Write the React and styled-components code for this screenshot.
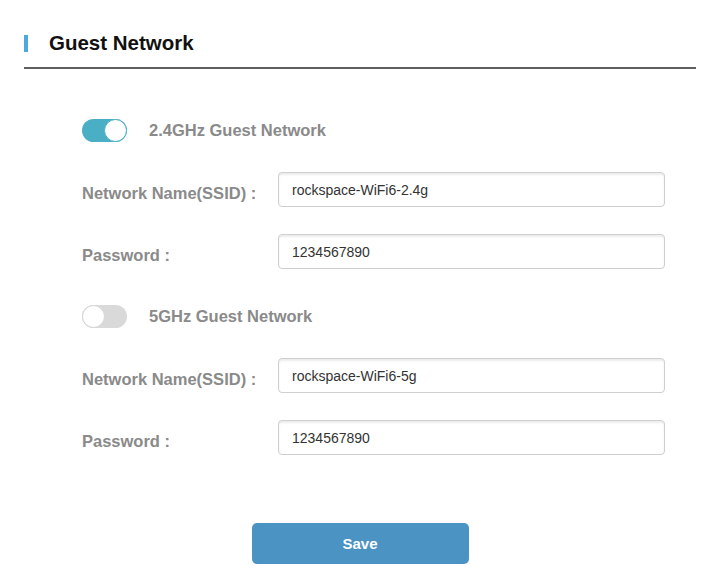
import React, { useState } from "react";
import styled, { createGlobalStyle } from "styled-components";

const GlobalStyle = createGlobalStyle`
	body {
		margin: 0;
		background: #ffffff;
		font-family: "Liberation Sans", Arial, sans-serif;
	}
`;

const networks = [
	{ id: "24", band: "2.4GHz Guest Network", ssid: "rockspace-WiFi6-2.4g", password: "1234567890", on: true },
	{ id: "5", band: "5GHz Guest Network", ssid: "rockspace-WiFi6-5g", password: "1234567890", on: false },
];

export default function App() {
	const [state, setState] = useState(networks);

	const toggle = (id) =>
		setState((prev) => prev.map((n) => (n.id === id ? { ...n, on: !n.on } : n)));

	const update = (id, key, value) =>
		setState((prev) => prev.map((n) => (n.id === id ? { ...n, [key]: value } : n)));

	return (
		<>
			<GlobalStyle />
			<Page>
				<Header>
					<Accent />
					<Title>Guest Network</Title>
				</Header>
				<Form>
					{state.map((n, i) => (
						<Section key={n.id} $first={i === 0}>
							<ToggleRow>
								<Switch type="button" $on={n.on} onClick={() => toggle(n.id)}>
									<Knob $on={n.on} />
								</Switch>
								<BandLabel>{n.band}</BandLabel>
							</ToggleRow>
							<FieldRow>
								<FieldLabel>Network Name(SSID) :</FieldLabel>
								<Input
									value={n.ssid}
									onChange={(e) => update(n.id, "ssid", e.target.value)}
								/>
							</FieldRow>
							<FieldRow>
								<FieldLabel>Password :</FieldLabel>
								<Input
									value={n.password}
									onChange={(e) => update(n.id, "password", e.target.value)}
								/>
							</FieldRow>
						</Section>
					))}
				</Form>
				<SaveButton type="button">Save</SaveButton>
			</Page>
		</>
	);
}

const Page = styled.div`
	width: 719px;
	display: flex;
	flex-direction: column;
`;

const Header = styled.div`
	margin: 0 23px 0 24px;
	padding: 31px 0 12px;
	display: flex;
	align-items: center;
	gap: 21px;
	border-bottom: 2px solid #5e5e5e;
`;

const Accent = styled.span`
	width: 4px;
	height: 17px;
	background: #4fa8dc;
`;

const Title = styled.h1`
	margin: 0;
	font-size: 20.5px;
	line-height: 24px;
	font-weight: 700;
	color: #111111;
`;

const Form = styled.div`
	display: flex;
	flex-direction: column;
	padding-left: 82px;
`;

const Section = styled.div`
	display: flex;
	flex-direction: column;
	gap: 27px;
	margin-top: ${({ $first }) => ($first ? "49px" : "35px")};
`;

const ToggleRow = styled.div`
	display: flex;
	align-items: center;
	gap: 22px;
	height: 24px;
	margin-bottom: 3px;
`;

const Switch = styled.button`
	position: relative;
	width: 45px;
	height: 23px;
	padding: 0;
	border: none;
	border-radius: 12px;
	background: ${({ $on }) => ($on ? "#4aafc5" : "#d9d9d9")};
	cursor: pointer;
`;

const Knob = styled.span`
	position: absolute;
	top: 0;
	left: ${({ $on }) => ($on ? "22px" : "0")};
	width: 23px;
	height: 23px;
	box-sizing: border-box;
	border-radius: 50%;
	background: #ffffff;
	border: 1px solid ${({ $on }) => ($on ? "#4aafc5" : "#d4d4d4")};
`;

const BandLabel = styled.span`
	font-size: 16.5px;
	font-weight: 700;
	color: #8a8a8a;
`;

const FieldRow = styled.div`
	display: flex;
	align-items: center;
`;

const FieldLabel = styled.label`
	width: 196px;
	padding-top: 7px;
	font-size: 16.5px;
	font-weight: 700;
	color: #8a8a8a;
`;

const Input = styled.input`
	width: 387px;
	height: 35px;
	box-sizing: border-box;
	padding: 0 13px;
	border: 1px solid #cfcfcf;
	border-radius: 4px;
	box-shadow: inset 0 2px 2px rgba(0, 0, 0, 0.08);
	font-family: "Liberation Sans", Arial, sans-serif;
	font-size: 14px;
	color: #333333;
	outline: none;
`;

const SaveButton = styled.button`
	align-self: center;
	margin: 68px 0 0 1px;
	width: 217px;
	height: 41px;
	border: none;
	border-radius: 5px;
	background: #4a93c3;
	color: #ffffff;
	font-family: "Liberation Sans", Arial, sans-serif;
	font-size: 15px;
	font-weight: 700;
	cursor: pointer;
`;
